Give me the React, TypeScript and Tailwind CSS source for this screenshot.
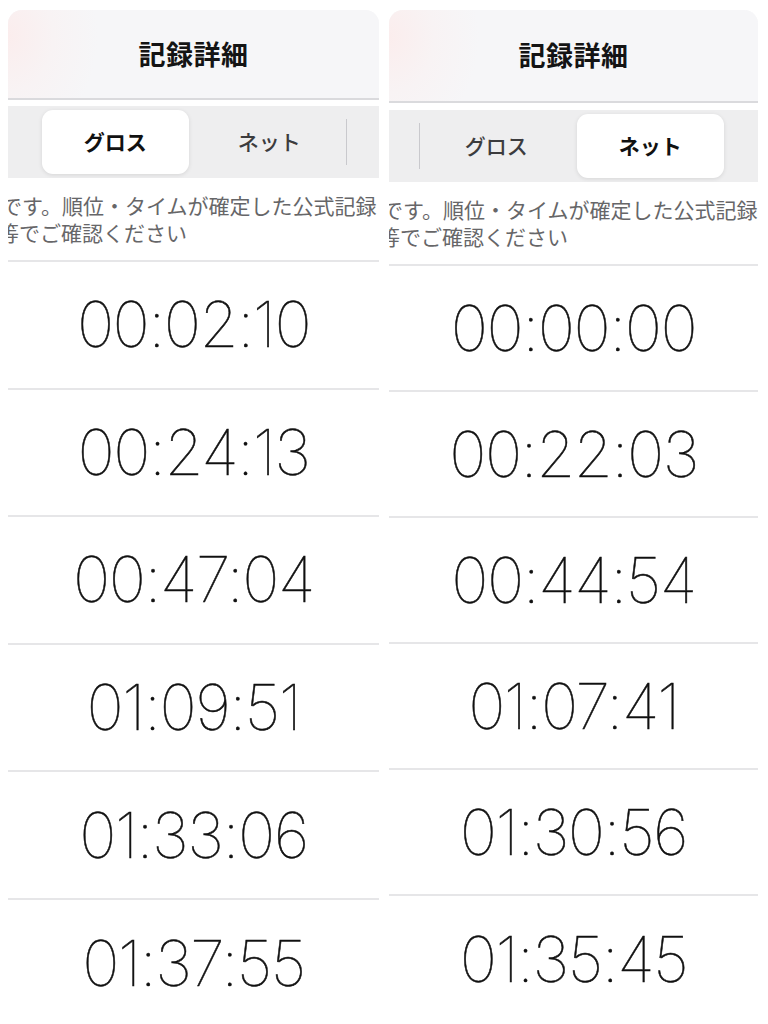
import React from 'react';

type PanelProps = {
  selected: number;
  times: string[];
  headerH: string;
  bandGap: string;
  rowH: string;
};

const SEGMENTS = ['', 'グロス', 'ネット', ''];

function Segmented({ selected }: { selected: number }) {
  return (
    <div className="flex h-[72px] items-center bg-[#eeeeef] overflow-hidden">
      <div className="flex items-center -ml-[123px] shrink-0">
        {SEGMENTS.map((label, i) => {
          const showDivider = i > 0 && i - 1 !== selected && i !== selected;
          const active = i === selected;
          return (
            <React.Fragment key={i}>
              {i > 0 && (
                <div className={`w-[1.5px] h-[46px] shrink-0 ${showDivider ? 'bg-[#c9c9cd]' : 'bg-transparent'}`} />
              )}
              <div className="w-[152.5px] h-[72px] shrink-0 p-[4px_3px]">
                <div
                  className={`h-full flex items-center justify-center rounded-[11px] text-[21px] ${
                    active
                      ? 'bg-white font-bold text-[#111] shadow-[0_1px_4px_rgba(0,0,0,0.10)]'
                      : 'font-medium text-[#3c3c3e]'
                  }`}
                >
                  {label}
                </div>
              </div>
            </React.Fragment>
          );
        })}
      </div>
    </div>
  );
}

function Panel({ selected, times, headerH, bandGap, rowH }: PanelProps) {
  return (
    <div className="flex flex-col overflow-hidden">
      {/* Header */}
      <div
        className={`${headerH} shrink-0 flex items-center justify-center rounded-t-[14px] border-b-2 border-[#dadadd] bg-[#f6f6f8] bg-[radial-gradient(ellipse_90px_110px_at_0%_30%,#fbeded_0%,#f8f3f4_50%,#f6f6f8_100%)]`}
      >
        <h1 className="text-[27px] font-bold text-[#141414] tracking-[0.5px]">記録詳細</h1>
      </div>

      <div className={bandGap} />
      <Segmented selected={selected} />

      {/* Notice */}
      <div className="pt-[14px] pb-[14px] text-[21px] leading-[27px] text-[#666668] whitespace-nowrap border-b-2 border-[#e6e6e8]">
        <div className="-ml-[7px]">です。順位・タイムが確定した公式記録</div>
        <div className="-ml-[10px]">等でご確認ください</div>
      </div>

      {/* Times */}
      {times.map((t, i) => (
        <div
          key={t}
          className={`${rowH} shrink-0 flex items-center justify-center ${
            i < times.length - 1 ? 'border-b-2 border-[#e6e6e8]' : ''
          }`}
        >
          <span className="font-['Inter'] font-thin text-[63px] text-[#111] tracking-[-1.5px] leading-none [-webkit-text-stroke:0.5px_#111]">
            {t}
          </span>
        </div>
      ))}
    </div>
  );
}

export default function App() {
  return (
    <div className="w-[768px] h-[1024px] overflow-hidden bg-white flex gap-[10px] pl-[8px] font-['Noto_Sans_CJK_JP','Noto_Sans',sans-serif]">
      <div className="w-[371px] pt-[10px]">
        <Panel
          selected={1}
          times={['00:02:10', '00:24:13', '00:47:04', '01:09:51', '01:33:06', '01:37:55']}
          headerH="h-[90px]"
          bandGap="h-[6px]"
          rowH="h-[127.6px]"
        />
      </div>
      <div className="w-[369px] pt-[10px]">
        <Panel
          selected={2}
          times={['00:00:00', '00:22:03', '00:44:54', '01:07:41', '01:30:56', '01:35:45']}
          headerH="h-[93px]"
          bandGap="h-[7px]"
          rowH="h-[126px]"
        />
      </div>
    </div>
  );
}
